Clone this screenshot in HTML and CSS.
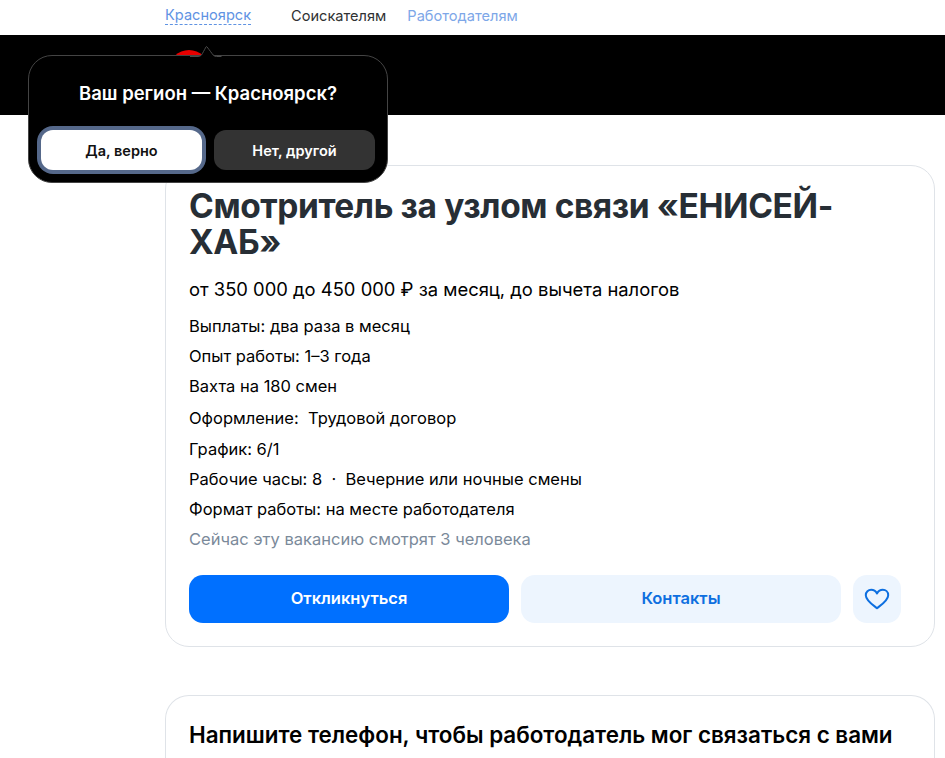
FILE: index.html
```html
<!DOCTYPE html>
<html lang="ru">
<head>
    <meta charset="UTF-8">
    <meta name="viewport" content="width=device-width, initial-scale=1.0">
    <title>Смотритель за узлом связи</title>
    <link rel="stylesheet" href="styles.css">
</head>
<body>
    <nav class="top-nav">
        <a class="region-link">Красноярск</a>
        <a class="nav-link nav-active">Соискателям</a>
        <a class="nav-link nav-muted">Работодателям</a>
    </nav>
    <header class="black-bar">
        <div class="logo-dot"></div>
    </header>

    <div class="region-popup">
        <svg class="popup-arrow" width="32" height="11" viewBox="0 0 32 11">
            <path d="M0 10.500h8c3 0 4-2 5.500-5 1.500-2.500 2.500-5 3-5s2 2.500 4 5c2 2.500 3 5 6 5h5" fill="#000" stroke="#4a4a4a" stroke-width="1"/>
        </svg>
        <div class="popup-title">Ваш регион — Красноярск?</div>
        <div class="popup-buttons">
            <button class="popup-btn popup-yes">Да, верно</button>
            <button class="popup-btn popup-no">Нет, другой</button>
        </div>
    </div>

    <main class="content">
        <section class="card vacancy-card">
            <h1 class="vacancy-title">Смотритель за узлом связи «ЕНИСЕЙ-ХАБ»</h1>
            <p class="salary">от 350 000 до 450 000 ₽ за месяц, до вычета налогов</p>
            <ul class="facts">
                <li>Выплаты: два раза в месяц</li>
                <li>Опыт работы: 1–3 года</li>
                <li>Вахта на 180 смен</li>
                <li class="fact-tall">Оформление:&nbsp; Трудовой договор</li>
                <li>График: 6/1</li>
                <li>Рабочие часы: 8 &nbsp;·&nbsp; Вечерние или ночные смены</li>
                <li>Формат работы: на месте работодателя</li>
                <li class="fact-muted">Сейчас эту вакансию смотрят 3 человека</li>
            </ul>
            <div class="actions">
                <button class="btn btn-primary">Откликнуться</button>
                <button class="btn btn-light">Контакты</button>
                <button class="btn btn-light btn-icon" aria-label="В избранное">
                    <svg width="26" height="22" viewBox="0 0 26 22" fill="none">
                        <path d="M13 20.200C9 17 1.800 12.500 1.800 7.200 1.800 4 4.300 1.800 7.200 1.800c2.400 0 4.500 1.300 5.800 3.600 1.300-2.300 3.400-3.600 5.800-3.600 2.900 0 5.400 2.200 5.400 5.400 0 5.300-7.200 9.800-11.200 13z" stroke="#0d6fe0" stroke-width="2" stroke-linejoin="round"/>
                    </svg>
                </button>
            </div>
        </section>

        <section class="card phone-card">
            <h2 class="phone-title">Напишите телефон, чтобы работодатель мог связаться с вами</h2>
        </section>
    </main>
</body>
</html>
```

FILE: styles.css
```css
html, body {
    height: 758px;
    overflow: hidden;
}
body {
    margin: 0;
    font-family: Inter, "Noto Sans", sans-serif;
    background-color: white;
    color: #000;
}

.top-nav {
    height: 35px;
    padding-left: 165px;
    display: flex;
    align-items: center;
    font-size: 14.600px;
    line-height: 18px;
    box-sizing: border-box;
    padding-bottom: 4px;
}
.region-link {
    color: #5f93e3;
    border-bottom: 1px dashed #5f93e3;
    margin-right: 40px;
}
.nav-link {
    margin-right: 21px;
}
.nav-active {
    color: #303233;
}
.nav-muted {
    color: #7da7e8;
}

.black-bar {
    height: 80px;
    background-color: #000;
    padding: 15px 0 0 169px;
    box-sizing: border-box;
}
.logo-dot {
    width: 40px;
    height: 40px;
    border-radius: 50%;
    background-color: #e60000;
}

.region-popup {
    position: absolute;
    left: 28px;
    top: 55px;
    width: 360px;
    height: 128px;
    box-sizing: border-box;
    background-color: #000;
    border: 1px solid #444;
    border-radius: 24px;
    padding: 0 12px;
    z-index: 5;
}
.popup-arrow {
    position: absolute;
    left: 161px;
    top: -10px;
}
.popup-title {
    color: white;
    font-size: 18.500px;
    font-weight: 600;
    line-height: 24px;
    text-align: center;
    margin-top: 25px;
}
.popup-buttons {
    display: flex;
    gap: 12px;
    margin-top: 25px;
}
.popup-btn {
    flex: 1;
    height: 40px;
    border: none;
    border-radius: 12px;
    font-family: inherit;
    font-size: 14.500px;
    font-weight: 600;
}
.popup-yes {
    background-color: white;
    color: #111;
    box-shadow: 0 0 0 4px #55688a;
}
.popup-no {
    background-color: #333;
    color: white;
}

.content {
    padding: 50px 10px 0 165px;
}
.card {
    border: 1px solid #dfe3e8;
    border-radius: 24px;
    background-color: white;
}
.vacancy-card {
    height: 482px;
    box-sizing: border-box;
    padding: 22px 23px 0;
}
.vacancy-title {
    margin: 0;
    font-size: 33.500px;
    line-height: 36px;
    font-weight: 700;
    color: #272e35;
    letter-spacing: -0.4px;
}
.salary {
    margin: 17px 0 0;
    font-size: 18.400px;
    line-height: 24px;
}
.facts {
    list-style: none;
    margin: 10px 0 0;
    padding: 0;
    font-size: 16.500px;
    line-height: 30px;
}
.fact-tall {
    margin-top: 2px;
    margin-bottom: 1px;
}
.fact-muted {
    color: #7b8a9a;
}
.actions {
    display: flex;
    gap: 12px;
    margin-top: 21px;
}
.btn {
    width: 320px;
    height: 48px;
    border: none;
    border-radius: 14px;
    font-family: inherit;
    font-size: 16.500px;
    font-weight: 600;
    padding: 0 0 2px;
}
.btn-primary {
    background-color: #0070ff;
    color: white;
}
.btn-light {
    background-color: #edf5fe;
    color: #0d6fe0;
}
.btn-icon {
    width: 48px;
    display: flex;
    align-items: center;
    justify-content: center;
    padding: 0;
}

.phone-card {
    margin-top: 48px;
    height: 63px;
    padding: 24px 23px 0;
    box-sizing: border-box;
    border-bottom: none;
    border-radius: 24px 24px 0 0;
}
.phone-title {
    margin: 0;
    font-size: 22.400px;
    line-height: 30px;
    font-weight: 600;
    white-space: nowrap;
}
```
